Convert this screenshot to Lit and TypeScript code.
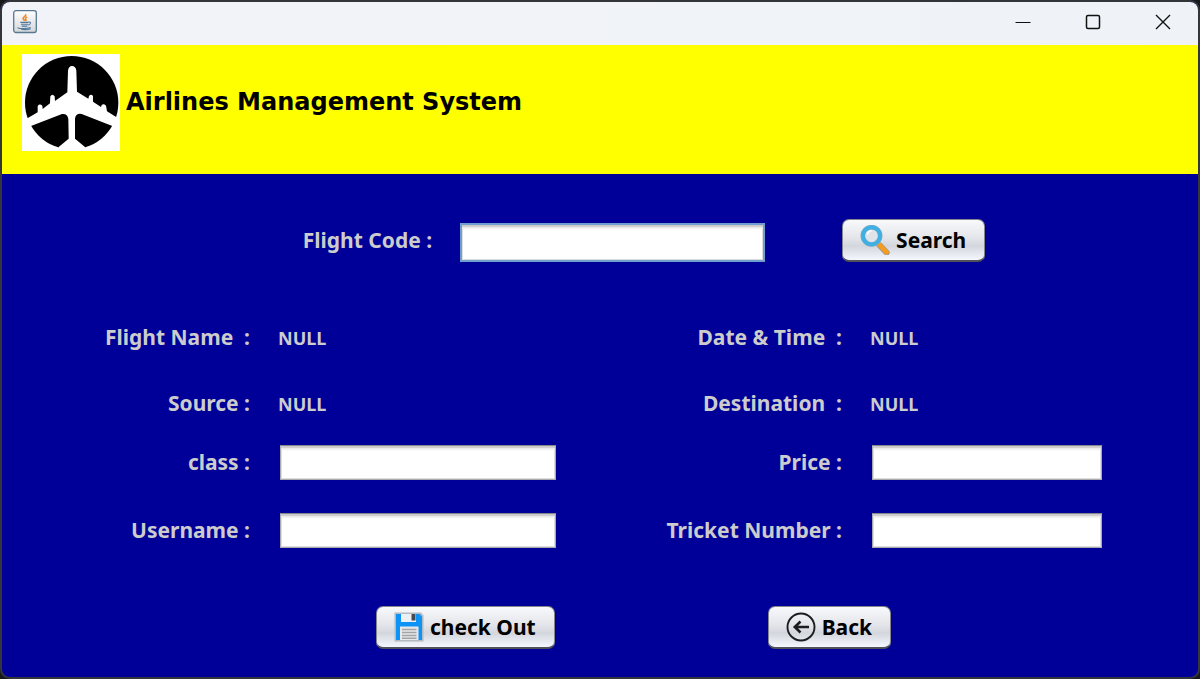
import { LitElement, html, css, svg } from "lit";
import { customElement, state } from "lit/decorators.js";

const javaIcon = svg`
  <svg class="java" viewBox="0 0 24 24" aria-hidden="true">
    <defs>
      <linearGradient id="javaFace" x1="0" y1="0" x2="0" y2="1">
        <stop offset="0" stop-color="#ffffff" />
        <stop offset="1" stop-color="#d4d6da" />
      </linearGradient>
    </defs>
    <rect x="0.7" y="0.7" width="22.6" height="21.8" rx="2.2" fill="url(#javaFace)" stroke="#55788f" stroke-width="1.3" />
    <path d="M12.4 4.2c1.8 1.6-2.9 2.7-2.4 4.4.2.9 1.2 1.4 1.6 2.3M14.2 7c-1.800.8-2.300 1.700-1.400 2.600.600.7.300 1.100-.2 1.600" fill="none" stroke="#f08326" stroke-width="1.5" />
    <path d="M7.300 12.400h8.200M8 14.300h7M8.600 16.100h5.800M15.600 12.100c2.600-.6 2.600 2.200-.4 3M5.200 17.400c-1.800 1.600 8.800 1.500 12.400.2M8 19.300c3.400.5 7.200.3 9.800-.6" fill="none" stroke="#50799c" stroke-width="1.1" />
  </svg>`;

const planeLogo = svg`
  <svg class="logo" viewBox="66 162 294 291" role="img" aria-label="Airplane">
    <rect x="66" y="162" width="294" height="291" fill="#fff" />
    <circle cx="215" cy="308" r="140" fill="#000" />
    <path fill="#fff" d="M204 212Q206 198 216 198Q227 198 229 212L231 275L265 296L267 288Q273 281 279 288L279 305L303 321L305 315Q311 310 318 317L321 334L358 357L346 381L335 377L245 342Q227 339 225 356L225 416L255 441L253 453L178 453L176 441L206 416L205 358Q203 340 186 342L95 377L84 381L72 361L113 337L113 318Q119 310 127 317L128 327L150 310L151 289Q157 280 164 289L165 303L202 277Z" />
  </svg>`;

const searchIcon = svg`
  <svg class="icon" viewBox="0 0 30 30" aria-hidden="true">
    <path d="M19.500 20.200L26.700 27.600" stroke="#9b9a96" stroke-width="6" stroke-linecap="round" />
    <path d="M19.800 20.200L26.600 27.300" stroke="#f39c1f" stroke-width="4.600" stroke-linecap="round" />
    <circle cx="11.500" cy="10.800" r="8.700" fill="#dfe3ea" stroke="#8eaebd" stroke-width="4.600" />
    <circle cx="11.500" cy="10.800" r="8.600" fill="none" stroke="#3fafe4" stroke-width="3.900" />
    <path d="M7.500 9.800a4.500 4.500 0 0 1 4-4" fill="none" stroke="#fff" stroke-width="1.400" />
  </svg>`;

const saveIcon = svg`
  <svg class="icon" viewBox="0 0 30 30" aria-hidden="true">
    <path d="M0.500 0.500H27L29.500 3.500V29.500H0.500Z" fill="#b4bac2" />
    <path d="M2 2H25.500L28 4.500V28H2Z" fill="#0c93f5" />
    <rect x="7" y="2" width="15" height="8" fill="#eceff3" />
    <rect x="17.500" y="2" width="4" height="6.500" fill="#454a52" />
    <rect x="6" y="14.500" width="18.500" height="13.500" fill="#e8e8ea" />
    <path d="M8 17.500H22.500M8 20.500H22.500M8 23.500H22.500M8 26.300H22.500" stroke="#a2a3a7" stroke-width="1.500" />
  </svg>`;

const backIcon = svg`
  <svg class="icon" viewBox="0 0 30 30" aria-hidden="true">
    <circle cx="15" cy="15" r="13.500" fill="none" stroke="#1c1d1f" stroke-width="1.900" />
    <path d="M23 15H8.500M14.500 9.500L8.800 15L14.500 20.500" fill="none" stroke="#1c1d1f" stroke-width="2.600" />
  </svg>`;

@customElement("app-root")
export class AppRoot extends LitElement {
  @state() private flightName = "NULL";
  @state() private dateTime = "NULL";
  @state() private source = "NULL";
  @state() private destination = "NULL";

  static styles = css`
    :host {
      display: block;
      background: #17181c;
      font-family: "Noto Sans", "Open Sans", sans-serif;
    }
    * {
      box-sizing: border-box;
    }
    .window {
      display: flex;
      flex-direction: column;
      min-height: 100vh;
      border: 2px solid #34353a;
      border-radius: 10px;
      overflow: hidden;
      background: #000099;
    }
    .titlebar {
      display: flex;
      align-items: center;
      justify-content: space-between;
      height: 43px;
      padding-left: 11px;
      background: linear-gradient(90deg, #f2f3f8, #eff3f7);
    }
    .java {
      display: block;
      width: 24px;
      height: 24px;
      margin-bottom: 4px;
    }
    .controls {
      display: flex;
    }
    .control {
      display: grid;
      place-items: center;
      width: 70px;
      height: 43px;
      padding: 0 0 3px;
      border: 0;
      background: none;
    }
    .glyph {
      width: 16px;
      height: 16px;
      fill: none;
      stroke: #111;
    }
    .banner {
      display: flex;
      align-items: flex-start;
      gap: 6px;
      height: 129px;
      padding: 9px 20px;
      background: #ffff00;
    }
    .logo {
      flex: none;
      width: 98px;
      height: 97px;
    }
    .title {
      margin: 0;
      font: 700 24px/97px "DejaVu Sans", sans-serif;
      color: #000;
    }
    .form {
      flex: 1;
      display: flex;
      flex-direction: column;
      gap: 58px;
      padding: 45px 96px 28px 100px;
      margin: 0;
    }
    .search {
      display: flex;
      align-items: flex-end;
      justify-content: center;
      padding-left: 84px;
    }
    .label {
      font-size: 21px;
      line-height: 35px;
      font-weight: 700;
      color: #cccccc;
      white-space: pre;
    }
    .search .label {
      align-self: center;
    }
    .details {
      display: grid;
      grid-template-columns: 148px 278fr 258px 232fr;
      grid-template-rows: 66px 59px 68px 35px;
      column-gap: 28px;
      align-items: start;
    }
    .details .label {
      text-align: right;
    }
    .value {
      font-size: 18px;
      line-height: 36px;
      font-weight: 700;
      color: #cccccc;
    }
    .field {
      min-width: 0;
      height: 35px;
      margin-left: 2px;
      padding: 4px 8px;
      border: 1px solid #a9a9ae;
      border-top-color: #85858a;
      border-radius: 0;
      outline: 0;
      background: #fff;
      box-shadow: inset 0 2px 1px #cbcbcb, inset 0 4px 2px #eeeeee, inset 0 -1px 0 #dddddd, inset 1px 0 0 #dddddd, inset -1px 0 0 #dddddd;
      font: 18px "Noto Sans", sans-serif;
    }
    .code {
      flex: 0 1 305px;
      height: 39px;
      margin: 0 77px 0 28px;
      border: 2px solid #6f9fce;
    }
    .actions {
      display: flex;
      justify-content: center;
      gap: 213px;
      padding-left: 63px;
    }
    .button {
      display: flex;
      align-items: center;
      gap: 6px;
      height: 43px;
      padding: 0 18px 0 17px;
      border: 1px solid #85858b;
      border-bottom: 2px solid #515158;
      border-radius: 7px;
      background: linear-gradient(#f8f9fb 0%, #e3e5ea 45%, #d3d6dd 65%, #f4f7fe 100%);
      font: 700 21px/30px "Noto Sans", "Open Sans", sans-serif;
      color: #000;
      white-space: nowrap;
    }
    .icon {
      width: 30px;
      height: 30px;
    }
  `;

  render() {
    return html`
      <div class="window">
        <div class="titlebar">
          ${javaIcon}
          <div class="controls">
            <button class="control" aria-label="Minimize">
              <svg class="glyph" viewBox="0 0 16 16"><path d="M0.500 8.500H15.500" /></svg>
            </button>
            <button class="control" aria-label="Maximize">
              <svg class="glyph" viewBox="0 0 16 16"><rect x="1.500" y="1.500" width="13" height="13" rx="1.500" stroke-width="1.500" /></svg>
            </button>
            <button class="control" aria-label="Close">
              <svg class="glyph" viewBox="0 0 16 16"><path d="M1 1L15 15M15 1L1 15" stroke-width="1.400" /></svg>
            </button>
          </div>
        </div>
        <header class="banner">
          ${planeLogo}
          <h1 class="title">Airlines Management System</h1>
        </header>
        <form class="form" @submit=${(e: Event) => e.preventDefault()}>
          <div class="search">
            <label class="label" for="code">Flight Code :</label>
            <input class="field code" id="code" type="text" />
            <button class="button" type="submit">${searchIcon}<span>Search</span></button>
          </div>
          <div class="details">
            <label class="label" for="name">Flight Name  :</label>
            <output class="value" id="name">${this.flightName}</output>
            <label class="label" for="date">Date &amp; Time  :</label>
            <output class="value" id="date">${this.dateTime}</output>
            <label class="label" for="source">Source :</label>
            <output class="value" id="source">${this.source}</output>
            <label class="label" for="destination">Destination  :</label>
            <output class="value" id="destination">${this.destination}</output>
            <label class="label" for="class">class :</label>
            <input class="field" id="class" type="text" />
            <label class="label" for="price">Price :</label>
            <input class="field" id="price" type="text" />
            <label class="label" for="user">Username :</label>
            <input class="field" id="user" type="text" />
            <label class="label" for="ticket">Tricket Number :</label>
            <input class="field" id="ticket" type="text" />
          </div>
          <div class="actions">
            <button class="button" type="button">${saveIcon}<span>check Out</span></button>
            <button class="button" type="button">${backIcon}<span>Back</span></button>
          </div>
        </form>
      </div>
    `;
  }
}
